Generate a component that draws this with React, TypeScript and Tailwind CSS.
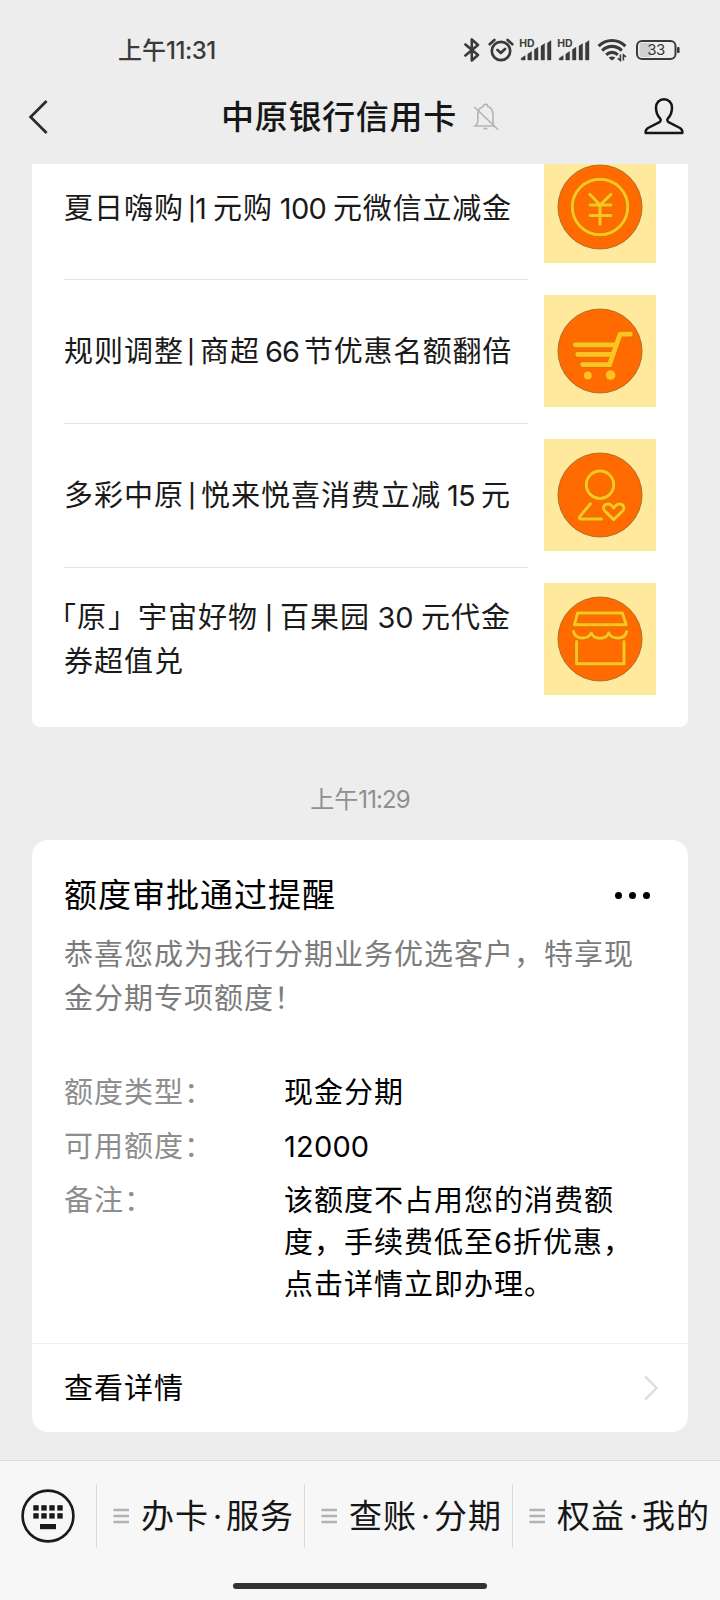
import type { ReactNode } from "react";

const THUMB_STROKE = "#ffc220";
const THUMB_EDGE = "#d07c00";

function Thumb({ children }: { children: ReactNode }) {
  return (
    <svg viewBox="0 0 112 112" className="h-28 w-28 shrink-0 bg-[#ffe99c]">
      <circle cx="56" cy="56" r="42" fill="#ff6b00" stroke="#a5682a" strokeWidth="0.9" />
      {children}
    </svg>
  );
}

// Every line is drawn twice: a darker, wider pass below the yellow one
function Outlined({ d, width = 3 }: { d: string; width?: number }) {
  return (
    <g fill="none" strokeLinecap="round" strokeLinejoin="round">
      <path d={d} stroke={THUMB_EDGE} strokeWidth={width + 1.4} />
      <path d={d} stroke={THUMB_STROKE} strokeWidth={width} />
    </g>
  );
}

function YenThumb() {
  return (
    <Thumb>
      <Outlined d="M28.3 56a27.7 27.7 0 1 0 55.4 0a27.7 27.7 0 1 0 -55.4 0" />
      <Outlined d="M45.7 43.3L56 54L67 43.3M46 54H67M46 64.4H67M56 54V73" />
    </Thumb>
  );
}

function CartThumb() {
  return (
    <Thumb>
      <Outlined width={4.8} d="M86.4 39.2H76L65.6 69.6H38.6M31.2 49.8H71M33.7 59.4H68" />
      <circle cx="43.8" cy="80.4" r="3.9" fill={THUMB_STROKE} />
      <circle cx="66.6" cy="80" r="4.8" fill={THUMB_STROKE} />
    </Thumb>
  );
}

function MemberThumb() {
  return (
    <Thumb>
      <Outlined d="M42.3 45.7a13.7 13.7 0 1 0 27.4 0a13.7 13.7 0 1 0 -27.4 0" />
      <Outlined d="M46.5 64.8L36 77.3C34.8 79 35.3 80 37.2 80H57.5" />
      <Outlined d="M69.7 80.6L61 72.2C58 69 60 65 64 65C66.8 65 68.4 67 69.7 69C71 67 72.6 65 75.4 65C79.4 65 81.4 69 78.4 72.2Z" />
    </Thumb>
  );
}

function ShopThumb() {
  return (
    <Thumb>
      <Outlined d="M33.6 30H78.4L82.2 41.8H30.4Z" />
      <Outlined d="M29.6 48.6C31 57 44 57 47.2 50C50 57 62 57 64.8 50C68 57 81 57 82.6 48.6" />
      <Outlined d="M32.6 58.4V80.8H80V58.4" />
    </Thumb>
  );
}

function SignalIcon() {
  return (
    <svg viewBox="0 0 33 24" className="h-6 w-[33px]">
      <text x="0.2" y="8.6" fontSize="10.4" fontWeight="700" fill="#3a3a3a" fontFamily="Inter, sans-serif">
        HD
      </text>
      <path
        d="M2.2 22V20.2L6.2 17.6V22ZM8.8 22V16L12.6 13.4V22ZM15.4 22V11.6L19 9.2V22ZM22 22V8L25.6 5.6V22ZM28.4 22V5L32 2.6V22Z"
        fill="#3a3a3a"
        stroke="#3a3a3a"
        strokeWidth="0.4"
        strokeLinejoin="round"
      />
    </svg>
  );
}

function StatusIcons() {
  return (
    <div className="flex items-center">
      <svg viewBox="0 0 16 24" className="h-6 w-4" fill="none" stroke="#3a3a3a" strokeWidth="2.6" strokeLinejoin="round" strokeLinecap="round">
        <path d="M1.4 6.5L14 17L7.8 22.4V1.4L14 7L1.4 17.5" />
      </svg>
      <svg viewBox="0 0 26 24" className="ml-2 h-6 w-[26px]" fill="none" stroke="#3a3a3a" strokeWidth="2.7" strokeLinecap="round" strokeLinejoin="round">
        <circle cx="13" cy="13" r="9.2" />
        <path d="M9.5 12L12.8 15L17 11M1.7 6.2L6.4 1.9M24.3 6.2L19.6 1.9" />
      </svg>
      <div className="ml-[5px] flex gap-[5px]">
        <SignalIcon />
        <SignalIcon />
      </div>
      <svg viewBox="0 0 30 24" className="ml-[7px] h-6 w-[30px]" fill="none" stroke="#3a3a3a" strokeWidth="3.1">
        <path d="M1.6 8.2C9 0.6 21 0.6 28.4 8.2" />
        <path d="M5.2 12.6C10.8 7 19.2 7 24.8 12.6" />
        <path d="M9.2 16.8C12.4 13.6 17.6 13.6 20.8 16.8" />
        <path d="M15 22.6L11.6 19.8C13.6 18 16.4 18 18.4 19.8Z" fill="#3a3a3a" stroke="none" />
        <path d="M23.4 16.6V22.4L20.8 20.4M26.4 22.6V16.8L29 18.8" strokeWidth="1.6" />
      </svg>
      <svg viewBox="0 0 45 20" className="ml-[9px] h-5 w-[45px]">
        <rect x="3.5" y="3" width="11.5" height="14" rx="2" fill="#cfcfcf" />
        <rect x="1" y="1" width="38.5" height="18" rx="5" fill="none" stroke="#3a3a3a" strokeWidth="2" />
        <rect x="41" y="7" width="2.6" height="6" rx="1" fill="#3a3a3a" />
        <text x="20" y="15.4" textAnchor="middle" fontSize="15" letterSpacing="-0.6" fill="#3a3a3a" fontFamily="Inter, sans-serif">
          33
        </text>
      </svg>
    </div>
  );
}

function Header() {
  return (
    <header className="h-[164px] shrink-0 bg-[#ededed]">
      <div className="flex h-[70px] items-center justify-between pt-[29px] pr-[39.5px] pl-[118px]">
        <span className="pt-[2px] text-[24px] leading-none font-medium text-[#3a3a3a]">
          上午<span className="tracking-[-0.5px]">11:31</span>
        </span>
        <StatusIcons />
      </div>
      <div className="flex h-[94px] items-center">
        <svg viewBox="0 0 20 34" className="mb-px ml-[28px] h-[34px] w-5" fill="none" stroke="#2a2a2a" strokeWidth="2.7">
          <path d="M18.6 1L2.6 17L18.6 33" />
        </svg>
        <h1 className="ml-[173px] text-[33px] leading-none font-medium tracking-[0.7px] text-[#161616]">中原银行信用卡</h1>
        <svg viewBox="0 0 26 28" className="mb-px ml-[16px] h-7 w-[26px]" fill="none" stroke="#b4b4b4" strokeWidth="1.6">
          <path d="M2.4 23C4.4 21.5 4.8 20 4.8 18V12C4.8 7.2 7.6 4.4 10.2 3.6C10.2 0.6 14.8 0.6 14.8 3.6C17.8 4.6 20 7.4 20 12V18C20 20 20.2 21.5 20.8 23Z" />
          <path d="M10.4 25.6H14.4" />
          <path d="M1.4 4L25 26.6" />
        </svg>
        <svg viewBox="0 0 40 38" className="mr-[36px] mb-[2px] ml-auto h-[38px] w-10" fill="none" stroke="#161616" strokeWidth="2.5" strokeLinejoin="round">
          <path d="M20 2.2C24.8 2.2 28 5.8 28 10.6C28 15 26.6 18.8 24 21.4C22.8 22.8 23.2 24.4 25 25.4L36 31C37.6 32 38.6 33.4 38.4 36H1.6C1.4 33.4 2.4 32 4 31L15 25.4C16.8 24.4 17.2 22.8 16 21.4C13.4 18.8 12 15 12 10.6C12 5.8 15.2 2.2 20 2.2Z" />
        </svg>
      </div>
    </header>
  );
}

function ArticleRow({ thumb, first, children }: { thumb: ReactNode; first?: boolean; children: ReactNode }) {
  return (
    <li className="flex h-36 items-center gap-4 pr-8 pl-8">
      <div className={`flex h-full w-[464px] flex-col justify-center text-[29px] leading-[44px] tracking-[1px] whitespace-nowrap text-[#1a1a1a] ${first ? "pt-[3px]" : "border-t border-[#e4e4e4] pt-px"}`}>
        {children}
      </div>
      {thumb}
    </li>
  );
}

function Bar() {
  return <span className="relative -top-[2px] text-[23px] leading-none font-medium">|</span>;
}

function ArticleCard() {
  return (
    <ul className="-mt-[29px] rounded-b-lg bg-white pb-4">
      <ArticleRow first thumb={<YenThumb />}>
        <p>
          夏日嗨购
          <span className="inline-block w-[29px] pl-[4px] tracking-[-1px]">
            <Bar />1
          </span>
          元购
          <span className="inline-block w-[60px] text-center tracking-[-0.6px]">100</span>
          <span className="tracking-[0.8px]">元微信立减金</span>
        </p>
      </ArticleRow>
      <ArticleRow thumb={<CartThumb />}>
        <p>
          规则调整
          <span className="inline-block w-[16px] pl-[3px]">
            <Bar />
          </span>
          商超
          <span className="inline-block w-[44px] text-center tracking-[-1px]">66</span>
          <span className="tracking-[0.7px]">节优惠名额翻倍</span>
        </p>
      </ArticleRow>
      <ArticleRow thumb={<MemberThumb />}>
        <p>
          多彩中原
          <span className="inline-block w-[17px] pl-[4px]">
            <Bar />
          </span>
          悦来悦喜消费立减
          <span className="inline-block w-[40px] text-center tracking-[-0.6px]">15</span>元
        </p>
      </ArticleRow>
      <ArticleRow thumb={<ShopThumb />}>
        <p>
          <span className="-ml-[17px]">「</span>
          <span>原</span>
          <span className="ml-px">」宇宙好物</span>
          <span className="inline-block w-[22px] pl-[7px]">
            <Bar />
          </span>
          百果园
          <span className="inline-block w-[51px] text-center tracking-normal">30</span>元代金
        </p>
        <p>券超值兑</p>
      </ArticleRow>
    </ul>
  );
}

const details = [
  { label: "额度类型：", value: ["现金分期"] },
  { label: "可用额度：", value: ["12000"] },
  { label: "备注：", value: ["该额度不占用您的消费额", "度，手续费低至6折优惠，", "点击详情立即办理。"] },
];

function NoticeCard() {
  return (
    <section className="flex h-[592px] flex-col rounded-2xl bg-white text-[29px] tracking-[1px]">
      <div className="flex items-center justify-between pt-[33px] pr-[38px] pl-8">
        <h2 className="text-[33px] leading-[44px] text-black">额度审批通过提醒</h2>
        <div className="flex gap-[7px]">
          <i className="h-[7px] w-[7px] rounded-full bg-black" />
          <i className="h-[7px] w-[7px] rounded-full bg-black" />
          <i className="h-[7px] w-[7px] rounded-full bg-black" />
        </div>
      </div>
      <p className="mt-[16px] pl-8 leading-[44px] whitespace-nowrap text-[#7c7c7c]">
        恭喜您成为我行分期业务优选客户，特享现
        <br />
        金分期专项额度！
      </p>
      <dl className="mt-[51px] flex flex-col gap-3 pl-8 leading-[42px]">
        {details.map((row) => (
          <div key={row.label} className="flex">
            <dt className="w-[220px] shrink-0 text-[#8e8e8e]">{row.label}</dt>
            <dd className="whitespace-nowrap text-black">
              {row.value.map((line) => (
                <div key={line} className={line === "12000" ? "tracking-[0.2px]" : ""}>
                  {line}
                </div>
              ))}
            </dd>
          </div>
        ))}
      </dl>
      <div className="mt-auto flex h-[89px] items-center justify-between border-t border-[#eeeeee] pr-[29px] pl-8 text-black">
        <span className="pt-px">查看详情</span>
        <svg viewBox="0 0 16 26" className="h-[26px] w-4" fill="none" stroke="#dcdcdc" strokeWidth="2.2">
          <path d="M2 1.4L13.6 13L2 24.6" />
        </svg>
      </div>
    </section>
  );
}

const menu = [
  ["办卡", "服务"],
  ["查账", "分期"],
  ["权益", "我的"],
];

function MenuBar() {
  return (
    <footer className="h-[140px] shrink-0 border-t border-[#dcdcdc] bg-[#f7f7f7]">
      <div className="flex h-[110px] items-center">
        <svg viewBox="0 0 54 54" className="mr-[21px] ml-[21px] h-[54px] w-[54px] shrink-0">
          <circle cx="27" cy="27" r="25.4" fill="none" stroke="#1a1a1a" strokeWidth="2.6" />
          {[12.3, 20.3, 28.3, 36.3].map((x) => (
            <g key={x} fill="#1a1a1a">
              <rect x={x} y="16.2" width="5.4" height="5.4" />
              <rect x={x} y="24.2" width="5.4" height="5.4" />
            </g>
          ))}
          <rect x="19" y="35" width="16" height="5.2" fill="#1a1a1a" />
        </svg>
        {menu.map(([left, right]) => (
          <button key={left} className="flex h-16 w-52 shrink-0 items-center border-l border-[#dadada] pl-[16px]">
            <svg viewBox="0 0 16 16" className="h-4 w-4" stroke="#b2b2b2" strokeWidth="2.4">
              <path d="M0.5 2H16M0.5 8H16M0.5 14H16" />
            </svg>
            <span className="ml-[12px] text-[33px] leading-none tracking-[1px] whitespace-nowrap text-[#161616]">
              {left}
              <span className="inline-block w-[17px] text-center tracking-normal">·</span>
              {right}
            </span>
          </button>
        ))}
      </div>
      <div className="mx-auto mt-[12px] h-[6px] w-[254px] rounded-full bg-[#333333]" />
    </footer>
  );
}

export default function App() {
  return (
    <div className="flex h-[1600px] w-[720px] flex-col overflow-hidden bg-[#ededed] font-[Inter,'Noto_Sans_CJK_SC',sans-serif]">
      <Header />
      <main className="flex-1 overflow-hidden px-8">
        <ArticleCard />
        <div className="flex h-[113px] items-center justify-center pt-[32px] text-[24px] text-[#8f8f8f]">
          <span>
            上午<span className="tracking-[-0.9px]">11:29</span>
          </span>
        </div>
        <NoticeCard />
      </main>
      <MenuBar />
    </div>
  );
}
